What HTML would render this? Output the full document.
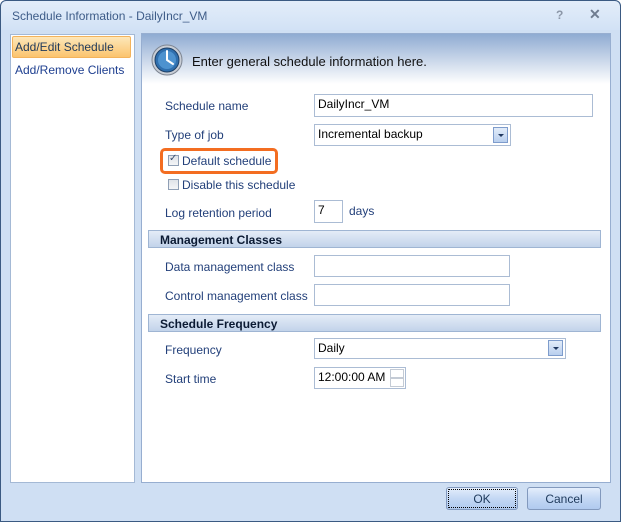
<!DOCTYPE html>
<html><head><style>
*{box-sizing:border-box;margin:0;padding:0}
body{width:621px;height:522px;font-family:"Liberation Sans",sans-serif;font-size:12px;color:#1e395b;overflow:hidden}
.win{position:absolute;left:0;top:0;width:621px;height:522px;background:#cfdff3;border-radius:6px 6px 0 0}
.wrap{position:absolute;left:1px;top:1px;width:620px;height:521px}
.frame{position:absolute;left:0;top:0;width:621px;height:522px;border:1px solid #3b5a82;border-radius:6px 6px 0 0;pointer-events:none}
.title{position:absolute;left:0;top:0;width:619px;height:29px;background:linear-gradient(#e3edf9,#d2e2f6);border-radius:6px 6px 0 0}
.title span{position:absolute;left:11px;top:8px;color:#3e5c88;font-size:12px}
.abs{position:absolute}
.left{left:9px;top:33px;width:125px;height:449px;background:#fff;border:1px solid #a4b9d5}
.sel{left:11px;top:35px;width:119px;height:22px;background:linear-gradient(#fde7b9,#fbc46e);border:1px solid #f3b35c;border-radius:2px}
.right{left:140px;top:32px;width:470px;height:450px;background:#fff;border:1px solid #97aed0}
.hdr{left:141px;top:33px;width:468px;height:50px;background:linear-gradient(#8fabd2,#fff)}
.lbl{position:absolute;color:#23407a}
.inp{position:absolute;background:#fff;border:1px solid #abbcd4;color:#000;padding:2px 3px}
.bar{position:absolute;left:148px;width:453px;height:18px;background:linear-gradient(#e4ecf7,#c2d3ea);border:1px solid #9fb5d3;font-weight:bold;color:#0b1a33;padding:2px 0 0 11px}
.dd{position:absolute;width:15px;height:16px;background:linear-gradient(#e2ecf9,#b8cfee);border:1px solid #7e9ccc;top:2px;right:2px}
.dd:after{content:"";position:absolute;left:4px;top:6px;border-left:3px solid transparent;border-right:3px solid transparent;border-top:3px solid #20385f}
.cb{position:absolute;width:11px;height:11px;border:1px solid #8f9fb5;background:linear-gradient(#dfe3e8,#f4f5f7)}
.btn{position:absolute;top:487px;height:23px;background:linear-gradient(#e4eefc,#c4d8f4 50%,#b0caef);border:1px solid #8299bd;border-radius:3px;text-align:center;padding-top:4px;color:#1e395b}
</style></head><body>
<div class="win"><div class="wrap">
<div class="title"><span>Schedule Information - DailyIncr_VM</span>
<span style="left:555px;top:7px;font-weight:bold;color:#8c97a8">?</span>
<span style="left:588px;top:5px;font-weight:bold;font-size:14px;color:#6f7c90">✕</span></div>
<div class="abs left"></div>
<div class="abs sel"></div>
<div class="lbl" style="left:14px;top:39px;color:#1e395b">Add/Edit Schedule</div>
<div class="lbl" style="left:14px;top:62px;color:#1e3f90">Add/Remove Clients</div>
<div class="abs right"></div>
<div class="abs hdr"></div>
<svg class="abs" style="left:150px;top:43px" width="32" height="32" viewBox="0 0 32 32">
<circle cx="16" cy="16" r="15" fill="#c9ced6" stroke="#7d8592"/>
<circle cx="16" cy="16" r="12" fill="#2f6fae" stroke="#1d3f66"/>
<circle cx="16" cy="16" r="9" fill="#4d92cf"/>
<path d="M16 16 V7 M16 16 L22 20" stroke="#fff" stroke-width="2" stroke-linecap="round"/>
</svg>
<div class="lbl" style="left:191px;top:53px;font-size:13px;color:#111">Enter general schedule information here.</div>

<div class="lbl" style="left:164px;top:98px">Schedule name</div>
<div class="inp" style="left:313px;top:93px;width:279px;height:23px">DailyIncr_VM</div>
<div class="lbl" style="left:164px;top:127px">Type of job</div>
<div class="inp" style="left:313px;top:123px;width:197px;height:22px">Incremental backup<div class="dd"></div></div>
<div class="abs" style="left:159px;top:147px;width:118px;height:26px;border:3px solid #f36d21;border-radius:5px"></div>
<div class="cb" style="left:167px;top:154px"><span style="position:absolute;left:0;top:-3px;font-size:10px;color:#3a4e6e">✓</span></div>
<div class="lbl" style="left:181px;top:153px">Default schedule</div>
<div class="cb" style="left:167px;top:178px"></div>
<div class="lbl" style="left:181px;top:177px">Disable this schedule</div>
<div class="lbl" style="left:164px;top:205px">Log retention period</div>
<div class="inp" style="left:313px;top:199px;width:29px;height:23px">7</div>
<div class="lbl" style="left:348px;top:203px">days</div>

<div class="bar" style="top:229px;left:147px">Management Classes</div>
<div class="lbl" style="left:164px;top:259px">Data management class</div>
<div class="inp" style="left:313px;top:254px;width:196px;height:22px"></div>
<div class="lbl" style="left:164px;top:288px">Control management class</div>
<div class="inp" style="left:313px;top:283px;width:196px;height:22px"></div>

<div class="bar" style="top:313px;left:147px">Schedule Frequency</div>
<div class="lbl" style="left:164px;top:342px">Frequency</div>
<div class="inp" style="left:313px;top:337px;width:252px;height:21px">Daily<div class="dd" style="top:1px"></div></div>
<div class="lbl" style="left:164px;top:371px">Start time</div>
<div class="inp" style="left:313px;top:366px;width:92px;height:22px">12:00:00 AM
<div style="position:absolute;right:1px;top:1px;width:14px;height:9px;border:1px solid #c4cbd5"></div>
<div style="position:absolute;right:1px;top:10px;width:14px;height:9px;border:1px solid #c4cbd5"></div></div>

<div class="btn" style="left:445px;width:72px;top:486px;outline:1px dotted #000;outline-offset:-3px">OK</div>
<div class="btn" style="left:526px;width:74px;top:486px">Cancel</div>
</div>
<div class="frame"></div>
</div>
</body></html>
